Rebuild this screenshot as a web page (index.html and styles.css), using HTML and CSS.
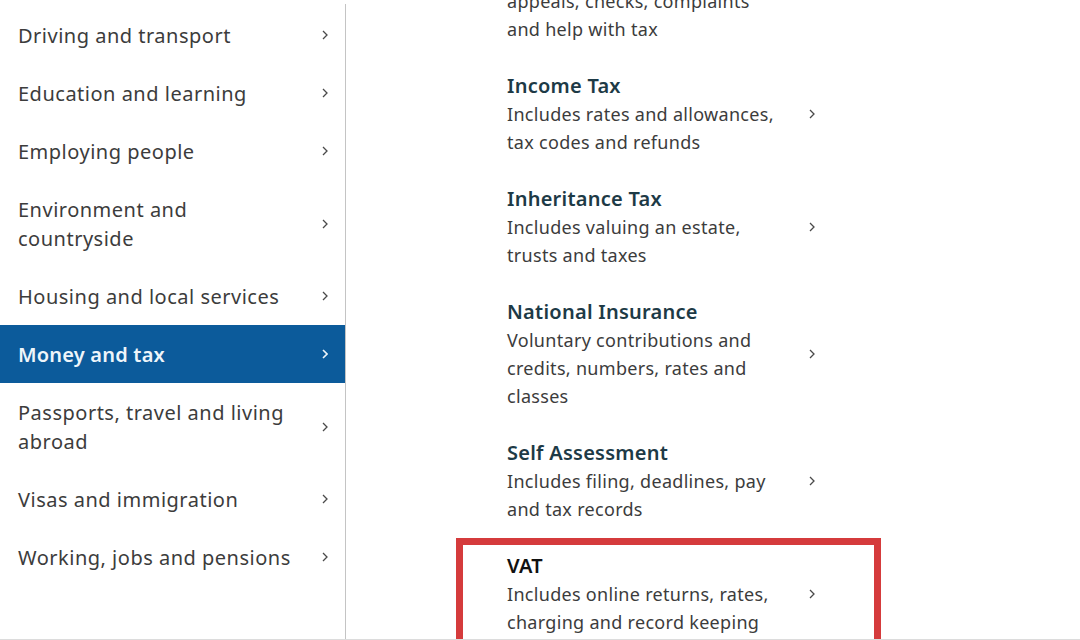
FILE: index.html
```html
<!DOCTYPE html>
<html lang="en">
<head>
<meta charset="utf-8">
<title>Money and tax</title>
<link rel="stylesheet" href="styles.css">
</head>
<body>
<div class="page">
  <nav class="nav">
    <a class="nav-item" href="#"><span>Driving and transport</span><svg class="chev" viewBox="0 0 6 10"><polyline points="1,1 5,5 1,9"/></svg></a>
    <a class="nav-item" href="#"><span>Education and learning</span><svg class="chev" viewBox="0 0 6 10"><polyline points="1,1 5,5 1,9"/></svg></a>
    <a class="nav-item" href="#"><span>Employing people</span><svg class="chev" viewBox="0 0 6 10"><polyline points="1,1 5,5 1,9"/></svg></a>
    <a class="nav-item" href="#"><span>Environment and<br>countryside</span><svg class="chev" viewBox="0 0 6 10"><polyline points="1,1 5,5 1,9"/></svg></a>
    <a class="nav-item" href="#"><span>Housing and local services</span><svg class="chev" viewBox="0 0 6 10"><polyline points="1,1 5,5 1,9"/></svg></a>
    <a class="nav-item active" href="#"><span>Money and tax</span><svg class="chev" viewBox="0 0 6 10"><polyline points="1,1 5,5 1,9"/></svg></a>
    <a class="nav-item" href="#"><span>Passports, travel and living<br>abroad</span><svg class="chev" viewBox="0 0 6 10"><polyline points="1,1 5,5 1,9"/></svg></a>
    <a class="nav-item" href="#"><span>Visas and immigration</span><svg class="chev" viewBox="0 0 6 10"><polyline points="1,1 5,5 1,9"/></svg></a>
    <a class="nav-item" href="#"><span>Working, jobs and pensions</span><svg class="chev" viewBox="0 0 6 10"><polyline points="1,1 5,5 1,9"/></svg></a>
  </nav>
  <main class="topics">
    <a class="topic" href="#"><div class="topic-text"><div class="topic-title">Dealing with HMRC</div><div class="topic-desc">Includes paying HMRC,<br>appeals, checks, complaints<br>and help with tax</div></div><svg class="chev" viewBox="0 0 6 10"><polyline points="1,1 5,5 1,9"/></svg></a>
    <a class="topic" href="#"><div class="topic-text"><div class="topic-title">Income Tax</div><div class="topic-desc">Includes rates and allowances,<br>tax codes and refunds</div></div><svg class="chev" viewBox="0 0 6 10"><polyline points="1,1 5,5 1,9"/></svg></a>
    <a class="topic" href="#"><div class="topic-text"><div class="topic-title">Inheritance Tax</div><div class="topic-desc">Includes valuing an estate,<br>trusts and taxes</div></div><svg class="chev" viewBox="0 0 6 10"><polyline points="1,1 5,5 1,9"/></svg></a>
    <a class="topic" href="#"><div class="topic-text"><div class="topic-title">National Insurance</div><div class="topic-desc">Voluntary contributions and<br>credits, numbers, rates and<br>classes</div></div><svg class="chev" viewBox="0 0 6 10"><polyline points="1,1 5,5 1,9"/></svg></a>
    <a class="topic" href="#"><div class="topic-text"><div class="topic-title">Self Assessment</div><div class="topic-desc">Includes filing, deadlines, pay<br>and tax records</div></div><svg class="chev" viewBox="0 0 6 10"><polyline points="1,1 5,5 1,9"/></svg></a>
    <a class="topic highlighted" href="#"><div class="topic-text"><div class="topic-title vat">VAT</div><div class="topic-desc">Includes online returns, rates,<br>charging and record keeping</div></div><svg class="chev" viewBox="0 0 6 10"><polyline points="1,1 5,5 1,9"/></svg></a>
  </main>
</div>
</body>
</html>
```
FILE: styles.css
```css
html, body {
  margin: 0;
  padding: 0;
  background: #ffffff;
}
body {
  width: 1080px;
  height: 640px;
  overflow: hidden;
  font-family: "Noto Sans", "Liberation Sans", sans-serif;
  color: #383838;
  position: relative;
}
body::after {
  content: "";
  position: absolute;
  left: 0;
  right: 0;
  bottom: 0;
  height: 1px;
  background: #dcdcdc;
}
a {
  color: inherit;
  text-decoration: none;
}
.page {
  display: flex;
  align-items: flex-start;
}
.nav {
  width: 345px;
  flex: none;
  margin-top: 4px;
  padding-top: 2px;
  min-height: 700px;
  border-right: 1px solid #c4c4c4;
  display: flex;
  flex-direction: column;
}
.nav-item {
  display: flex;
  align-items: center;
  justify-content: space-between;
  padding: 14.5px 17px 14.5px 18px;
  font-size: 20px;
  line-height: 29px;
  letter-spacing: 0.5px;
  color: #3c3c3c;
}
.nav-item.active {
  background: #0c5b9b;
  color: #eef5fa;
  font-weight: 600;
  letter-spacing: 0.2px;
}
.chev {
  width: 6px;
  height: 10px;
  flex: none;
  fill: none;
  stroke: #4a4a4a;
  stroke-width: 1.3;
}
.nav-item.active .chev {
  stroke: #eef5fa;
  stroke-width: 1.6;
}
.topics {
  margin-left: 110px;
  margin-top: -83.5px;
  width: 425px;
  display: flex;
  flex-direction: column;
}
.topic {
  display: flex;
  align-items: center;
  justify-content: space-between;
  padding: 14.5px 66px 14.5px 51px;
}
.topic.highlighted {
  outline: 7px solid #d53b3c;
  outline-offset: -7px;
}
.topic-title {
  font-size: 20px;
  line-height: 28px;
  font-weight: 600;
  letter-spacing: 0.25px;
  color: #1d3a46;
}
.topic-title.vat {
  color: #111;
}
.topic-desc {
  font-size: 18px;
  line-height: 28px;
  letter-spacing: 0.3px;
  color: #3c3c3c;
}
```
